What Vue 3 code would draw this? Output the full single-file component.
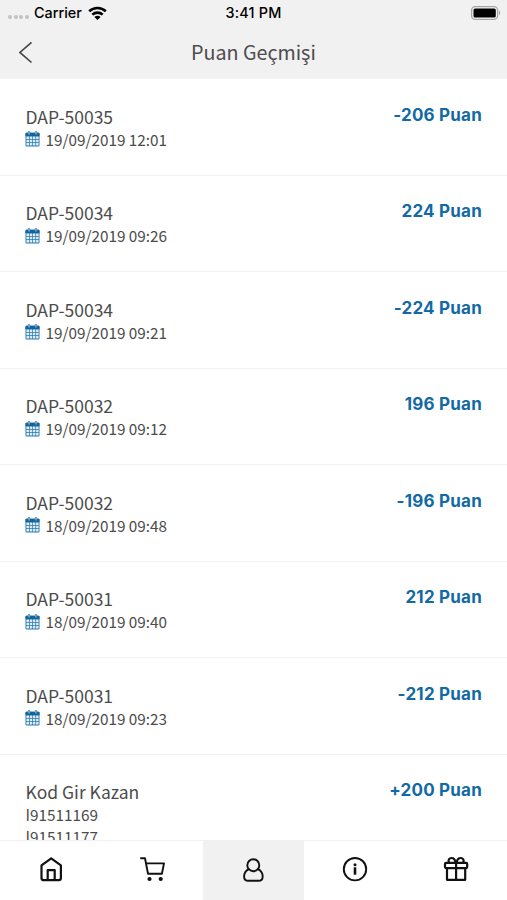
<script setup>
const rows = [
  { title: 'DAP-50035', date: '19/09/2019 12:01', points: '-206 Puan' },
  { title: 'DAP-50034', date: '19/09/2019 09:26', points: '224 Puan' },
  { title: 'DAP-50034', date: '19/09/2019 09:21', points: '-224 Puan' },
  { title: 'DAP-50032', date: '19/09/2019 09:12', points: '196 Puan' },
  { title: 'DAP-50032', date: '18/09/2019 09:48', points: '-196 Puan' },
  { title: 'DAP-50031', date: '18/09/2019 09:40', points: '212 Puan' },
  { title: 'DAP-50031', date: '18/09/2019 09:23', points: '-212 Puan' },
  { title: 'Kod Gir Kazan', codes: ['I91511169', 'I91511177'], points: '+200 Puan' },
]
</script>

<template>
  <div class="screen">
    <header class="header">
      <div class="status">
        <div class="carrier">
          <span class="dots"><i v-for="n in 4" :key="n"></i></span>
          <span class="carrier-name">Carrier</span>
          <svg class="wifi" width="19" height="15" viewBox="0 0 19 15">
            <g fill="none" stroke="#000" stroke-width="2.6">
              <path d="M1.2 5.3C5.9.9 13.1.9 17.8 5.3" />
              <path d="M4.3 8.6c3-2.7 7.4-2.7 10.4 0" />
            </g>
            <path d="M6.4 10.9c1.8-1.5 4.4-1.5 6.2 0L9.5 14z" />
          </svg>
        </div>
        <span class="time">3:41 PM</span>
        <svg class="battery" width="32" height="16" viewBox="0 0 32 16">
          <rect x="1.6" y="1.6" width="26" height="12.8" rx="3.6" fill="#f5f5f5" stroke="#a5a5a5" stroke-width="1.3" />
          <rect x="3.5" y="3.5" width="22.3" height="9" rx="1.6" />
          <path d="M29 5.8c1.6.6 1.6 3.8 0 4.4z" fill="#a5a5a5" />
        </svg>
      </div>
      <div class="nav">
        <svg class="back" width="16" height="24" viewBox="0 0 16 24">
          <path d="M13.5 2.3 1.9 12.4l11.6 10.1" fill="none" stroke="#444" stroke-width="1.6" />
        </svg>
        <h1>Puan Geçmişi</h1>
        <span></span>
      </div>
    </header>

    <main class="list">
      <section v-for="(row, i) in rows" :key="i" class="row">
        <div class="info">
          <div class="title">{{ row.title }}</div>
          <div v-if="row.date" class="date">
            <svg width="15" height="16" viewBox="0 0 15 16">
              <path d="M1.5 1.8h12q1 0 1 1V14.4q0 1-1 1h-12q-1 0-1-1V2.8q0-1 1-1z" fill="#2878ad" />
              <path d="M.5 5.2V2.8q0-1 1-1h12q1 0 1 1v2.4z" fill="#14639b" />
              <path d="M3.3.5h1.5v3H3.3zM10.2.5h1.5v3h-1.5z" fill="#cfe2ee" stroke="#2878ad" stroke-width=".7" />
              <path d="M1.4 5.5h2.6v2.5H1.4zM4.7 5.5h2.5v2.5H4.7zM7.9 5.5h2.5v2.5H7.9zM11.1 5.5h2.5v2.5h-2.5zM1.4 8.7h2.6v2.5H1.4zM4.7 8.7h2.5v2.5H4.7zM7.9 8.7h2.5v2.5H7.9zM11.1 8.7h2.5v2.5h-2.5zM1.4 11.9h2.6v2.5H1.4zM4.7 11.9h2.5v2.5H4.7zM7.9 11.9h2.5v2.5H7.9zM11.1 11.9h2.5v2.5h-2.5z" fill="#dcebf4" />
            </svg>
            <span>{{ row.date }}</span>
          </div>
          <div v-for="code in row.codes" :key="code" class="code">{{ code }}</div>
        </div>
        <div class="points">{{ row.points }}</div>
      </section>
    </main>

    <nav class="tabs">
      <a class="tab">
        <svg width="26" height="28" viewBox="0 0 26 28" class="stroke">
          <path d="M3.5 10.3 13.2 3.4l9.7 6.9v12.7q0 2.200-2.2 2.200H5.7q-2.200 0-2.200-2.200z" />
          <path d="M9.7 25V15.200h7V25" />
        </svg>
      </a>
      <a class="tab">
        <svg width="26" height="28" viewBox="0 0 26 28" class="stroke thin">
          <path d="M2 3.2h4L9 18.8h13.9L25 8.4H7" />
          <circle cx="10.5" cy="24" r="2.1" class="solid" />
          <circle cx="21.7" cy="24" r="2.1" class="solid" />
        </svg>
      </a>
      <a class="tab active">
        <svg width="26" height="28" viewBox="0 0 26 28" class="stroke thin">
          <circle cx="13.3" cy="10.2" r="6" />
          <path d="M8.7 14.1c-3 1.7-4.6 4.3-4.6 7.4 0 2.9 1.4 4.3 4.2 4.3h10.2c2.8 0 4.2-1.4 4.2-4.3 0-3.1-1.6-5.7-4.6-7.4" />
        </svg>
      </a>
      <a class="tab">
        <svg width="26" height="28" viewBox="0 0 26 28" class="stroke thin">
          <circle cx="13" cy="14.2" r="11.2" />
          <path d="M13 12.3v7.4" stroke-width="2.6" stroke-linecap="butt" />
          <circle cx="13" cy="9.7" r="1.5" class="solid" />
        </svg>
      </a>
      <a class="tab">
        <svg width="26" height="28" viewBox="0 0 26 28" class="stroke">
          <rect x="2" y="7.9" width="22.2" height="5.2" rx="1" />
          <path d="M4 13.1v11.7h18.2V13.1M13.1 8v16.8" />
          <path d="M12.6 7.5C12.1 4.7 10.7 3 8.500 3 6.1 3 4.9 5 5.9 7.500M13.6 7.500c.5-2.800 1.900-4.500 4.100-4.500 2.400 0 3.600 2 2.600 4.500" />
        </svg>
      </a>
    </nav>
  </div>
</template>

<style>
body {
  margin: 0;
  background: #fff;
}
</style>

<style scoped>
.screen {
  display: flex;
  flex-direction: column;
  width: 507px;
  height: 900px;
  overflow: hidden;
  background: #fff;
  color: #4c4c4c;
  font-family: 'Noto Sans CJK SC', 'Noto Sans', sans-serif;
}
.header {
  flex: none;
  height: 79px;
  background: #f1f1f1;
}
.status {
  display: grid;
  grid-template-columns: 1fr auto 1fr;
  align-items: center;
  height: 26px;
  color: #000;
  font: 500 14.4px/26px Inter, sans-serif;
}
.carrier {
  display: flex;
  align-items: center;
  padding-left: 8px;
}
.dots {
  display: flex;
  gap: 1.5px;
  width: 26px;
  padding-top: 8px;
}
.dots i {
  width: 4px;
  height: 4px;
  border-radius: 50%;
  background: #c2c2c2;
}
.carrier-name {
  width: 54px;
}
.time {
  letter-spacing: 0.2px;
}
.battery {
  justify-self: end;
  margin-right: 5px;
}
.nav {
  display: grid;
  grid-template-columns: 1fr auto 1fr;
  align-items: center;
  height: 52px;
}
.back {
  margin-left: 18px;
}
h1 {
  margin: 0;
  font-size: 19.7px;
  font-weight: 400;
  line-height: 30px;
}
.list {
  flex: 1;
  min-height: 0;
  overflow: hidden;
}
.row {
  display: flex;
  justify-content: space-between;
  box-sizing: border-box;
  height: 96.5px;
  padding: 25.5px 25px 0 25.5px;
  border-bottom: 1px solid #f1f1f1;
}
.row:last-child {
  height: 140px;
}
.title {
  font-size: 17.5px;
  line-height: 24px;
}
.date {
  display: flex;
  align-items: center;
  gap: 6px;
  height: 21px;
  font-size: 15.3px;
  line-height: 21px;
}
.date svg {
  margin-left: -1px;
}
.code {
  font-size: 15.3px;
  line-height: 21.5px;
}
.points {
  color: #1269a4;
  font: 650 17px/20px Inter, sans-serif;
  letter-spacing: 0.22px;
}
.tabs {
  flex: none;
  display: grid;
  grid-template-columns: repeat(5, 1fr);
  box-sizing: border-box;
  height: 60px;
  border-top: 1px solid #f1f1f1;
}
.tab {
  display: flex;
  justify-content: center;
  padding-top: 14px;
}
.active {
  background: #f1f1f1;
}
.stroke {
  fill: none;
  stroke: #111;
  stroke-width: 2.2;
  stroke-linejoin: round;
  stroke-linecap: round;
}
.thin {
  stroke-width: 1.9;
}
.solid {
  fill: #111;
  stroke: none;
}
</style>
